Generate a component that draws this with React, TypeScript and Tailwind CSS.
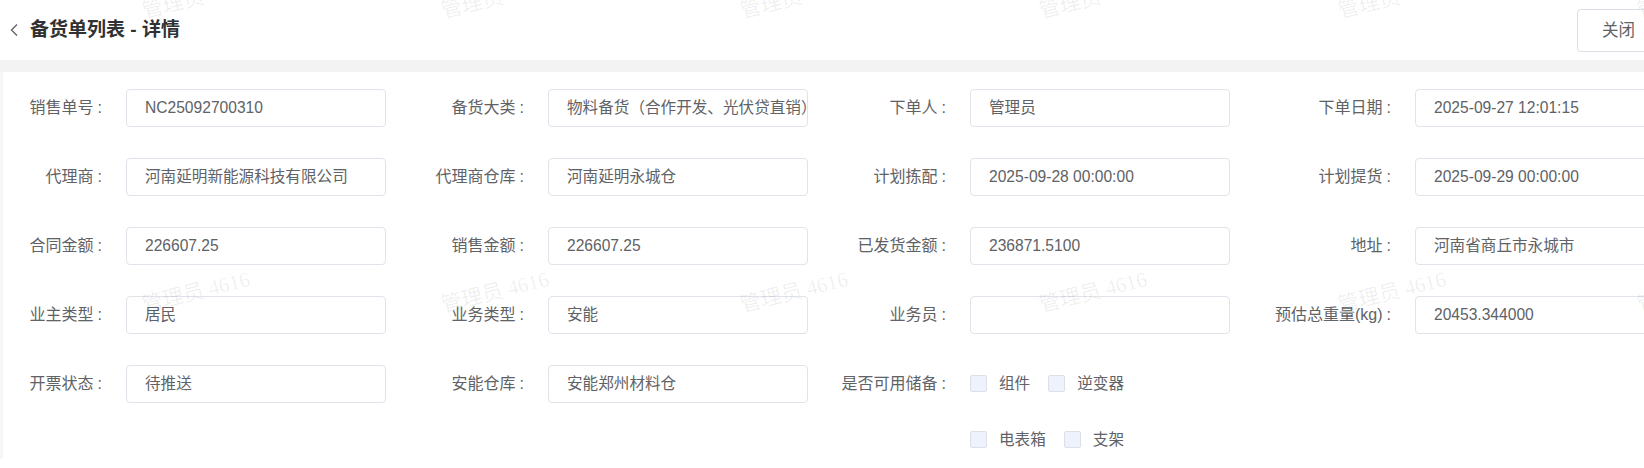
import React from "react";

interface Field {
    label: string;
    value: string;
}

const rows: Field[][] = [
    [
        { label: "销售单号", value: "NC25092700310" },
        { label: "备货大类", value: "物料备货（合作开发、光伏贷直销）" },
        { label: "下单人", value: "管理员" },
        { label: "下单日期", value: "2025-09-27 12:01:15" },
    ],
    [
        { label: "代理商", value: "河南延明新能源科技有限公司" },
        { label: "代理商仓库", value: "河南延明永城仓" },
        { label: "计划拣配", value: "2025-09-28 00:00:00" },
        { label: "计划提货", value: "2025-09-29 00:00:00" },
    ],
    [
        { label: "合同金额", value: "226607.25" },
        { label: "销售金额", value: "226607.25" },
        { label: "已发货金额", value: "236871.5100" },
        { label: "地址", value: "河南省商丘市永城市" },
    ],
    [
        { label: "业主类型", value: "居民" },
        { label: "业务类型", value: "安能" },
        { label: "业务员", value: "" },
        { label: "预估总重量(kg)", value: "20453.344000" },
    ],
];

const reserveRows = [
    ["组件", "逆变器"],
    ["电表箱", "支架"],
];

// Label widths per column (first one minus the 3px left edge, last one wider)
const labelWidths = ["w-[123px]", "w-[126px]", "w-[126px]", "w-[149px]"];

function Label({ text, col }: { text: string; col: number }) {
    return (
        <label
            className={`${labelWidths[col]} h-[38px] shrink-0 flex items-center justify-end pr-[24px] text-[16px] text-[#606266] whitespace-nowrap`}
        >
            {text}
            <span className="ml-[4px]">:</span>
        </label>
    );
}

function FormItem({ field, col }: { field: Field; col: number }) {
    return (
        <div className="flex items-center h-[38px]">
            <Label text={field.label} col={col} />
            <div className="w-[260px] h-[38px] shrink-0 flex items-center border border-[#e0e3ea] rounded-[4px] bg-white pl-[18px] overflow-hidden whitespace-nowrap text-[#606266]">
                {field.value}
            </div>
        </div>
    );
}

function Checkbox({ label }: { label: string }) {
    return (
        <div className="flex items-center mr-[18px]">
            <span className="w-[17px] h-[17px] border border-[#dcdfe6] bg-[#edf2fc] rounded-[2px] mr-[12px]" />
            <span className="text-[#606266]">{label}</span>
        </div>
    );
}

function Watermarks() {
    const marks: { x: number; y: number }[] = [];
    for (let j = 0; j < 2; j++) {
        for (let i = 0; i < 6; i++) {
            marks.push({ x: 196 + 299 * i, y: -2 + 294 * j });
        }
    }
    return (
        <div className="pointer-events-none absolute inset-0 overflow-hidden">
            {marks.map((m, idx) => (
                <span
                    key={idx}
                    className="absolute w-[120px] h-[24px] leading-[24px] text-center -rotate-[14deg] whitespace-nowrap text-[21px] text-black/[0.07] font-['Liberation_Serif','Noto_Sans_CJK_SC',serif]"
                    style={{ left: m.x - 60, top: m.y - 12 }}
                >
                    管理员 4616
                </span>
            ))}
        </div>
    );
}

export default function App() {
    return (
        <div className="relative w-full h-[468px] overflow-hidden bg-white font-['Liberation_Sans','Noto_Sans_CJK_SC',sans-serif] text-[15.6px]">
            <div className="w-[1660px]">
                {/* Header */}
                <div className="h-[60px] flex items-center">
                    <svg
                        width="10"
                        height="14"
                        viewBox="0 0 10 14"
                        className="ml-[9px] text-[#606266]"
                        fill="none"
                        stroke="currentColor"
                        strokeWidth="1.3"
                    >
                        <polyline points="8,1.5 2.5,7 8,12.5" />
                    </svg>
                    <h1 className="ml-[11px] text-[19px] font-bold text-[#303133]">
                        备货单列表 - 详情
                    </h1>
                    <button className="ml-auto h-[43px] px-[24px] border border-[#dcdfe6] rounded-[4px] bg-white text-[16.5px] text-[#606266]">
                        关闭
                    </button>
                </div>

                <div className="h-[12px] bg-[#f3f3f3]" />

                {/* Detail form */}
                <div className="border-l-[3px] border-[#f6f6f6] pt-[17px] flex flex-col gap-[31px]">
                    {rows.map((row, r) => (
                        <div key={r} className="flex gap-[36px]">
                            {row.map((f, c) => (
                                <FormItem key={c} field={f} col={c} />
                            ))}
                        </div>
                    ))}

                    <div className="flex gap-[36px] items-start">
                        <FormItem field={{ label: "开票状态", value: "待推送" }} col={0} />
                        <FormItem field={{ label: "安能仓库", value: "安能郑州材料仓" }} col={1} />
                        <div className="flex items-start">
                            <Label text="是否可用储备" col={2} />
                            <div className="flex flex-col gap-[18px]">
                                {reserveRows.map((items, i) => (
                                    <div key={i} className="h-[38px] flex items-center">
                                        {items.map((it) => (
                                            <Checkbox key={it} label={it} />
                                        ))}
                                    </div>
                                ))}
                            </div>
                        </div>
                    </div>
                </div>
            </div>
            <Watermarks />
        </div>
    );
}
